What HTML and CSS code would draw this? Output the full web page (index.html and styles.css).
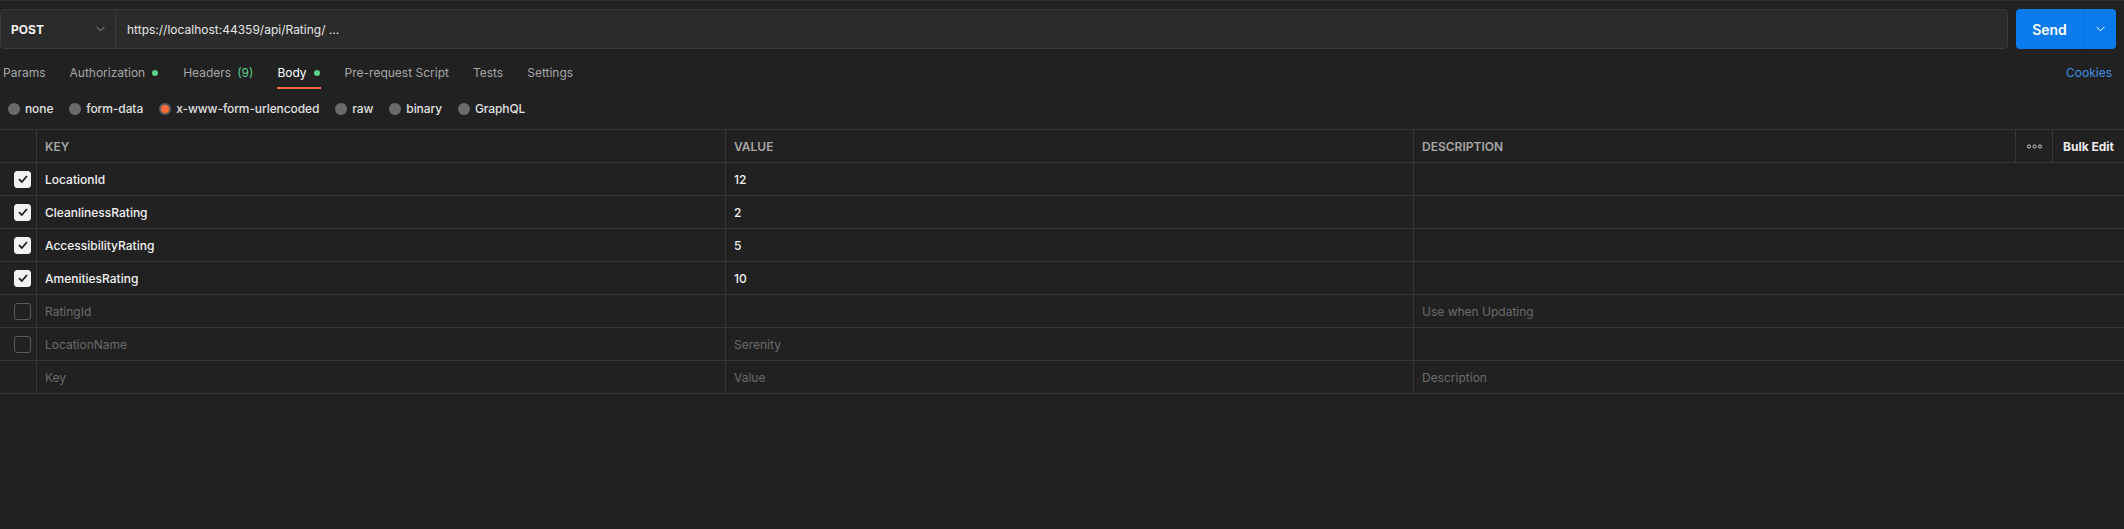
FILE: index.html
```html
<!DOCTYPE html>
<html>
<head>
<meta charset="utf-8">
<link rel="stylesheet" href="styles.css">
</head>
<body>
<div class="app">
  <div class="request-bar">
    <div class="url-group">
      <div class="method">
        <span class="method-name">POST</span>
        <svg class="chev" width="9" height="6" viewBox="0 0 9 6"><path d="M0.5 0.8 L4.5 4.8 L8.5 0.8" fill="none" stroke="#9a9a9a" stroke-width="1"/></svg>
      </div>
      <div class="url">https://localhost:44359/api/Rating/ ...</div>
    </div>
    <div class="send">
      <span class="send-label">Send</span>
      <span class="send-drop"><svg width="9" height="6" viewBox="0 0 9 6"><path d="M0.5 0.8 L4.5 4.8 L8.5 0.8" fill="none" stroke="#ffffff" stroke-width="1"/></svg></span>
    </div>
  </div>

  <div class="tabs-row">
    <div class="tabs">
      <span class="tab">Params</span>
      <span class="tab">Authorization<i class="dot"></i></span>
      <span class="tab">Headers<span class="count">(9)</span></span>
      <span class="tab active">Body<i class="dot"></i></span>
      <span class="tab">Pre-request Script</span>
      <span class="tab">Tests</span>
      <span class="tab">Settings</span>
    </div>
    <span class="cookies">Cookies</span>
  </div>

  <div class="body-types">
    <span class="opt"><i class="radio"></i>none</span>
    <span class="opt"><i class="radio"></i>form-data</span>
    <span class="opt"><i class="radio on"></i>x-www-form-urlencoded</span>
    <span class="opt"><i class="radio"></i>raw</span>
    <span class="opt"><i class="radio"></i>binary</span>
    <span class="opt"><i class="radio"></i>GraphQL</span>
  </div>

  <div class="kv-table">
    <div class="row head">
      <div class="cell chk"></div>
      <div class="cell">KEY</div>
      <div class="cell">VALUE</div>
      <div class="cell desc-head">
        <span class="desc-title">DESCRIPTION</span>
        <span class="more"><svg width="15" height="5" viewBox="0 0 15 5"><circle cx="2" cy="2.5" r="1.6" fill="none" stroke="#d0d0d0" stroke-width="1"/><circle cx="7.5" cy="2.5" r="1.6" fill="none" stroke="#d0d0d0" stroke-width="1"/><circle cx="13" cy="2.5" r="1.6" fill="none" stroke="#d0d0d0" stroke-width="1"/></svg></span>
        <span class="bulk">Bulk Edit</span>
      </div>
    </div>
    <div class="row">
      <div class="cell chk"><span class="box checked"><svg width="10" height="8" viewBox="0 0 10 8"><path d="M1 4.2 L3.8 7 L9 1" fill="none" stroke="#212121" stroke-width="1.8"/></svg></span></div>
      <div class="cell">LocationId</div>
      <div class="cell">12</div>
      <div class="cell"></div>
    </div>
    <div class="row">
      <div class="cell chk"><span class="box checked"><svg width="10" height="8" viewBox="0 0 10 8"><path d="M1 4.2 L3.8 7 L9 1" fill="none" stroke="#212121" stroke-width="1.8"/></svg></span></div>
      <div class="cell">CleanlinessRating</div>
      <div class="cell">2</div>
      <div class="cell"></div>
    </div>
    <div class="row">
      <div class="cell chk"><span class="box checked"><svg width="10" height="8" viewBox="0 0 10 8"><path d="M1 4.2 L3.8 7 L9 1" fill="none" stroke="#212121" stroke-width="1.8"/></svg></span></div>
      <div class="cell">AccessibilityRating</div>
      <div class="cell">5</div>
      <div class="cell"></div>
    </div>
    <div class="row">
      <div class="cell chk"><span class="box checked"><svg width="10" height="8" viewBox="0 0 10 8"><path d="M1 4.2 L3.8 7 L9 1" fill="none" stroke="#212121" stroke-width="1.8"/></svg></span></div>
      <div class="cell">AmenitiesRating</div>
      <div class="cell">10</div>
      <div class="cell"></div>
    </div>
    <div class="row off">
      <div class="cell chk"><span class="box"></span></div>
      <div class="cell">RatingId</div>
      <div class="cell"></div>
      <div class="cell">Use when Updating</div>
    </div>
    <div class="row off">
      <div class="cell chk"><span class="box"></span></div>
      <div class="cell">LocationName</div>
      <div class="cell">Serenity</div>
      <div class="cell"></div>
    </div>
    <div class="row off">
      <div class="cell chk"></div>
      <div class="cell">Key</div>
      <div class="cell">Value</div>
      <div class="cell">Description</div>
    </div>
  </div>
</div>
</body>
</html>
```

FILE: styles.css
```css
html, body {
  margin: 0;
  padding: 0;
  background: #212121;
}
body {
  font-family: Inter, "Noto Sans", sans-serif;
  font-size: 12px;
  color: #ededed;
  height: 529px;
  overflow: hidden;
}
.app {
  border-top: 1px solid #2c2c2c;
}

/* request bar */
.request-bar {
  display: flex;
  align-items: stretch;
  padding: 8px 8px 0 0;
  gap: 8px;
}
.url-group {
  flex: 1;
  display: flex;
  height: 38px;
  background: #2b2b2b;
  border: 1px solid #3a3a3a;
  border-radius: 4px;
}
.method {
  width: 94px;
  padding: 0 10px;
  border-right: 1px solid #3a3a3a;
  display: flex;
  align-items: center;
  justify-content: space-between;
}
.method-name {
  font-weight: 700;
  font-size: 12px;
  color: #f2f2f2;
}
.chev { display: block; }
.url {
  display: flex;
  align-items: center;
  padding-left: 11px;
  color: #e6e6e6;
}
.send {
  width: 100px;
  height: 40px;
  display: flex;
  background: #097bed;
  border-radius: 4px;
}
.send-label {
  width: 67px;
  display: flex;
  align-items: center;
  justify-content: center;
  font-weight: 600;
  font-size: 14px;
  color: #ffffff;
  border-right: 1px solid #0a6ed4;
}
.send-drop {
  flex: 1;
  display: flex;
  align-items: center;
  justify-content: center;
}
.send-drop svg { display: block; }

/* tabs */
.tabs-row {
  display: flex;
  justify-content: space-between;
  padding: 0 12px 0 3px;
}
.tabs {
  display: flex;
  gap: 24px;
}
.tab {
  display: flex;
  align-items: center;
  padding: 16px 0 6px;
  line-height: 16px;
  color: #a6a6a6;
  border-bottom: 2px solid transparent;
  white-space: pre;
}
.tab.active {
  color: #ffffff;
  border-bottom-color: #ff6c37;
}
.count {
  color: #5cd08e;
  margin-left: 6px;
}
.dot {
  width: 6px;
  height: 6px;
  border-radius: 50%;
  background: #5cd08e;
  margin-left: 7px;
  margin-right: 1px;
}
.cookies {
  padding-top: 16px;
  line-height: 16px;
  color: #3f90e0;
}

/* body type radios */
.body-types {
  display: flex;
  gap: 16px;
  padding: 12px 0 12px 8px;
}
.opt {
  display: flex;
  align-items: center;
  line-height: 16px;
  color: #e0e0e0;
  font-weight: 500;
  letter-spacing: -0.1px;
}
.radio {
  width: 12px;
  height: 12px;
  border-radius: 50%;
  background: #6b6b6b;
  margin-right: 5px;
  box-sizing: border-box;
}
.radio.on {
  background: #ff6c37;
  border: 2.5px solid #5e5e5e;
}

/* table */
.kv-table {
  border-top: 1px solid #363636;
}
.row {
  display: grid;
  grid-template-columns: 37px 689px 688px 1fr;
  height: 33px;
  border-bottom: 1px solid #363636;
  box-sizing: border-box;
}
.cell {
  display: flex;
  align-items: center;
  padding: 0 8px;
  border-right: 1px solid #363636;
  color: #f2f2f2;
  font-weight: 500;
  min-width: 0;
}
.cell:last-child { border-right: none; }
.head .cell {
  color: #a6a6a6;
  font-weight: 600;
}
.off .cell { color: #6b6b6b; font-weight: 400; }
.cell.chk {
  padding: 0 0 0 14px;
}
.box {
  width: 17px;
  height: 17px;
  box-sizing: border-box;
  border: 1px solid #5c5c5c;
  border-radius: 3px;
  display: flex;
  align-items: center;
  justify-content: center;
}
.box.checked {
  background: #f2f2f2;
  border-color: #f2f2f2;
}
.box svg { display: block; }
.desc-head {
  padding-right: 0;
  align-items: stretch;
}
.desc-title {
  flex: 1;
  display: flex;
  align-items: center;
}
.more {
  width: 36px;
  border-left: 1px solid #363636;
  display: flex;
  align-items: center;
  justify-content: center;
}
.more svg { display: block; }
.bulk {
  width: 61px;
  border-left: 1px solid #363636;
  display: flex;
  align-items: center;
  padding-left: 10px;
  color: #ededed;
  font-weight: 700;
}
```
